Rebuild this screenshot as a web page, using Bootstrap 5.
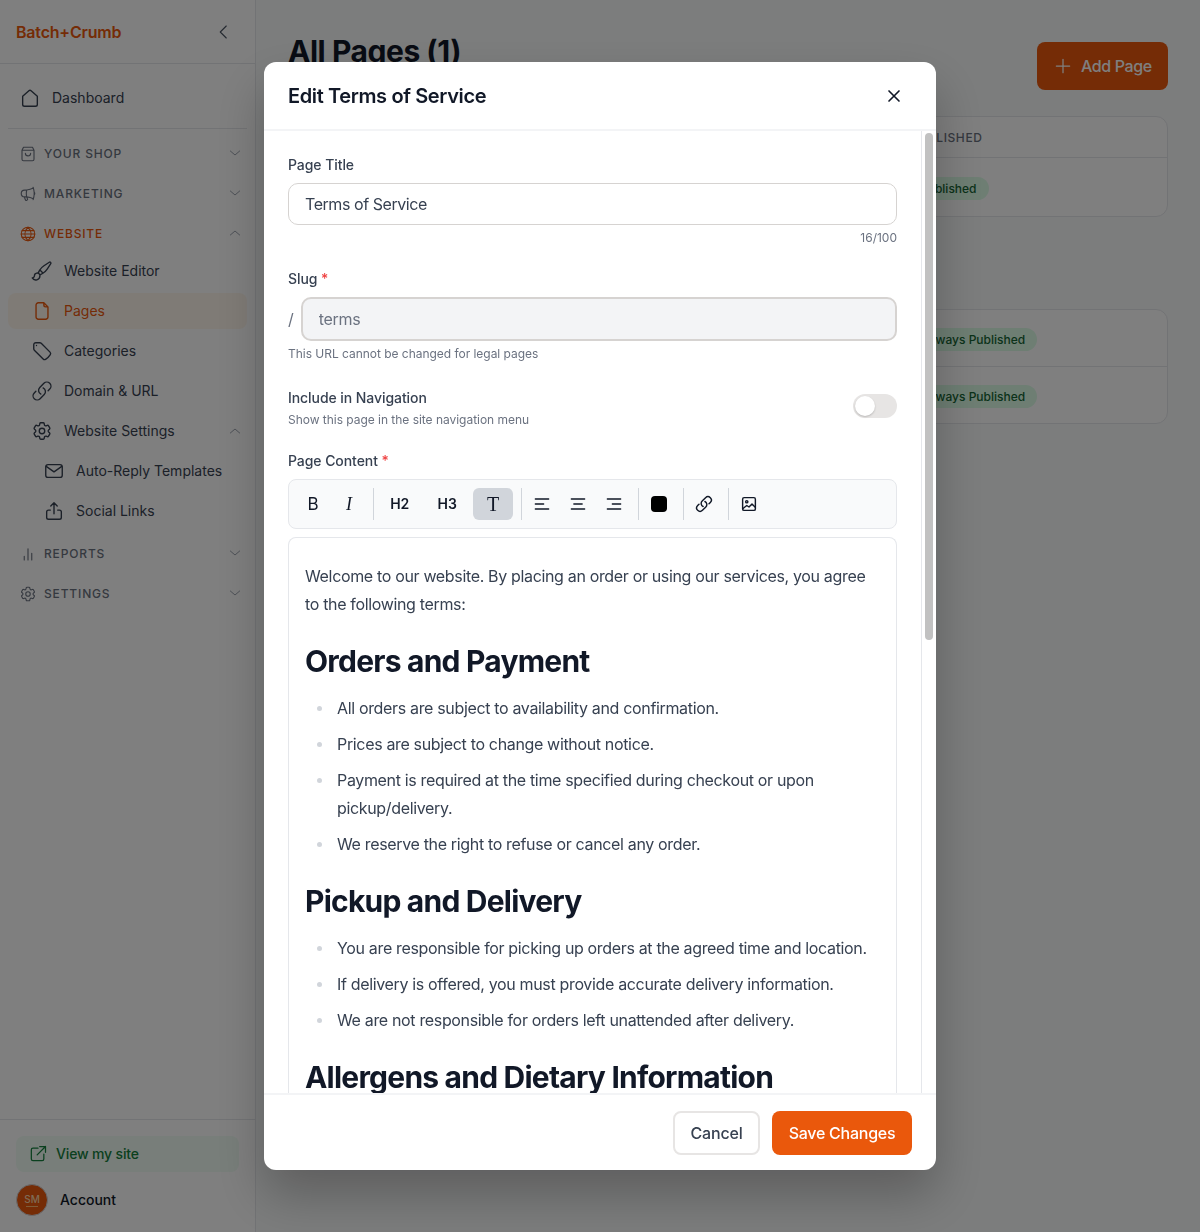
<!DOCTYPE html>
<html lang="en">
<head>
  <meta charset="UTF-8" />
  <meta name="viewport" content="width=device-width, initial-scale=1" />
  <title>All Pages</title>
  <link href="https://cdn.jsdelivr.net/npm/bootstrap@5.3.3/dist/css/bootstrap.min.css" rel="stylesheet" />
  <style>
    html, body { height: 100%; }
    body { font-family: Inter, "Liberation Sans", sans-serif; background: #f9fafb; color: #374151; overflow: hidden; }
    .ico { fill: none; stroke: currentColor; stroke-width: 1.5; stroke-linecap: round; stroke-linejoin: round; flex-shrink: 0; }
    .ico-22 { width: 22px; height: 22px; }
    .ico-18 { width: 18px; height: 18px; }
    .ico-16 { width: 16px; height: 16px; }
    .ico-20 { width: 20px; height: 20px; }

    .side { width: 256px; height: 100vh; background: #fff; border-right: 1px solid #e5e7eb; flex-shrink: 0; }
    .side-brand { height: 64px; padding: 0 16px; border-bottom: 1px solid #e5e7eb; }
    .brand-name { font-size: 16px; font-weight: 600; color: #ea580c; letter-spacing: -.2px; }
    .brand-back { color: #4b5563; margin-right: 6px; }
    .side-nav { padding-top: 14px; }
    .side-link { height: 36px; margin: 2px 8px; padding-right: 4px; padding-bottom: 1px; border-radius: 8px; font-size: 14px; color: #374151; gap: 11px; }
    .side-link.depth-0 { padding-left: 11px; }
    .side-link.depth-1 { padding-left: 23px; }
    .side-link.depth-2 { padding-left: 35px; }
    .side-link.is-active { background: #fff7ed; color: #ea580c; }
    .side-rule { margin: 12px 8px 4px; border-top: 1px solid #e5e7eb; }
    .side-group { height: 40px; margin: 0 8px; padding: 1px 4px 0 11px; gap: 7px; font-size: 12px; font-weight: 500; letter-spacing: .07em; color: #6b7280; text-transform: uppercase; }
    .side-group .chev { margin-top: -1px; }
    .side-group.is-active { color: #ea580c; }
    .side-group.is-active .chev { color: #9ca3af; }
    .side-kids { margin: -2px 0 2px; }
    .chev { color: #9ca3af; margin-left: auto; }
    .side-foot { margin-top: auto; border-top: 1px solid #e5e7eb; padding: 16px; }
    .site-link { height: 36px; padding: 0 0 1px 12px; gap: 8px; border-radius: 8px; background: #f0fdf4; color: #15803d; font-size: 14px; font-weight: 500; letter-spacing: -.15px; }
    .acct { margin-top: 12px; gap: 12px; font-size: 14px; font-weight: 500; color: #111827; }
    .acct-name { margin-bottom: 1px; }
    .avatar { width: 32px; height: 32px; border-radius: 50%; background: #ea580c; border: 1px solid #d1d5db; color: #fed7aa; font-size: 10px; line-height: 1; }
    .avatar-sub { width: 12px; height: 1px; margin-top: 2px; background: #fdba74; }

    .main-area { padding: 33px 32px 0; min-width: 0; }
    .page-title { font-size: 30px; font-weight: 700; line-height: 36px; color: #111827; margin: 0; letter-spacing: -.46px; }
    .add-btn { height: 48px; width: 131px; margin-top: 9px; padding: 0 16px; gap: 8px; border-radius: 8px; background: #ea580c; color: #fff; font-size: 16px; font-weight: 500; letter-spacing: -.4px; border: 0; }
    .page-head { margin-bottom: 26px; }
    .page-box { background: #fff; border: 1px solid #e5e7eb; border-radius: 12px; }
    .page-box + .page-box { margin-top: 92px; }
    .box-row { padding: 3px 0 0 619px; border-bottom: 1px solid #e5e7eb; height: 57px; }
    .box-row:last-child { border-bottom: 0; height: 56px; }
    .box-head { height: 41px; font-size: 12px; font-weight: 500; letter-spacing: .05em; color: #6b7280; text-transform: uppercase; padding: 1px 0 0 621px; }
    .box-row.tall { height: 58px; padding-top: 2px; }
    .pub-pill { padding: 4px 12px; border-radius: 999px; background: #dcfce7; color: #166534; font-size: 12px; font-weight: 500; line-height: 15px; }
    .shift-pill { margin-left: 4px; }

    .modal-shade { z-index: 1055; }
    .edit-modal { width: 672px; height: 1108px; border: 0; border-radius: 12px; overflow: hidden; box-shadow: 0 25px 50px rgba(0,0,0,.25); }
    .edit-head { height: 69px; padding: 0 24px; border-bottom: 2px solid #f3f4f6; flex-shrink: 0; }
    .edit-title { font-size: 20px; font-weight: 600; color: #111827; margin: 0; letter-spacing: -.38px; }
    .edit-close { color: #111827; margin-right: 8px; stroke-width: 2; }
    .edit-body { min-height: 0; flex: 1; }
    .edit-scroll { flex: 1; min-width: 0; padding: 24px 24px 0; overflow: hidden; }
    .bar-gutter { width: 15px; border-left: 1px solid #e5e7eb; background: #fff; padding: 2px 2px 0 3px; flex-shrink: 0; }
    .bar-thumb { height: 507px; width: 8px; border-radius: 4px; background: #c1c1c1; }
    .fld-label { font-size: 14px; font-weight: 500; color: #374151; line-height: 20px; letter-spacing: -.07px; margin-bottom: 8px; }
    .fld-gap { margin-top: 23px; }
    .req { color: #ef4444; }
    .fld-input { height: 42px; border-radius: 10px; border: 1px solid #d6d3d1; font-size: 16px; letter-spacing: -.44px; color: #374151; padding: 0 16px; }
    .fld-count { font-size: 12px; color: #6b7280; line-height: 16px; margin-top: 5px; text-align: right; }
    .slug-wrap { gap: 7px; margin-bottom: 5px; }
    .slug-slash { color: #6b7280; font-size: 16px; }
    .slug-input { height: 44px; border: 2px solid #d6d3d1; border-radius: 10px; background: #f3f4f6 !important; color: #6b7280; font-size: 16px; letter-spacing: -.3px; padding: 0 16px; opacity: 1; }
    .fld-help { font-size: 12px; color: #6b7280; line-height: 16px; letter-spacing: -.03px; }
    .nav-row { margin-top: 26px; }
    .nav-toggle { width: 44px; height: 24px; margin-top: 6px; border-radius: 12px; background: #e7e5e4; padding: 2px; }
    .nav-knob { width: 20px; height: 20px; border-radius: 50%; background: #fff; box-shadow: 0 1px 2px rgba(0,0,0,.2); }
    .tool-bar { height: 50px; padding: 0 8px; gap: 4px; background: #f9fafb; border: 1px solid #e5e7eb; border-radius: 8px; }
    .tool-btn { width: 32px; height: 32px; border-radius: 6px; color: #111827; font-size: 17px; line-height: 1; }
    .tool-btn .ico { stroke-width: 1.9; }
    .tool-btn .ico-20 { stroke-width: 1.6; }
    .tool-btn.wide { width: 43.5px; font-size: 14px; font-weight: 600; }
    .tool-btn.tool-t { width: 40px; background: #d1d5db; font-family: "Liberation Serif", serif; font-size: 20px; }
    .tool-btn.tool-i { font-family: "Liberation Serif", serif; font-style: italic; font-size: 18px; }
    .tool-sep { width: 1px; height: 32px; margin-left: 4px; background: #d1d5db; }
    .tool-swatch { width: 16px; height: 16px; border-radius: 4px; background: #000; }
    .prose-box { margin-top: 8px; padding: 24px 16px 0; border: 1px solid #e5e7eb; border-bottom: 0; border-radius: 8px 8px 0 0; font-size: 16px; line-height: 28px; letter-spacing: -.34px; color: #374151; }
    .prose-box p { margin: 0; }
    .prose-box h2 { font-size: 30px; font-weight: 700; line-height: 36px; letter-spacing: -.78px; color: #111827; margin: 25px 0 15px; white-space: nowrap; }
    .prose-box ul { margin: 0; padding-left: 32px; list-style: none; }
    .prose-box li { position: relative; margin-bottom: 8px; }
    .prose-box li::before { content: ""; position: absolute; left: -20px; top: 12px; width: 5px; height: 5px; border-radius: 50%; background: #d1d5db; }
    .edit-foot { height: 77px; padding: 0 24px; gap: 12px; border-top: 2px solid #f3f4f6; flex-shrink: 0; }
    .btn-cancel { height: 44px; width: 87px; padding: 0; border: 2px solid #e7e5e4; border-radius: 8px; background: #fff; color: #374151; font-size: 16px; font-weight: 500; letter-spacing: -.15px; }
    .btn-save { height: 44px; width: 140px; padding: 0; border: 0; border-radius: 8px; background: #ea580c; color: #fff; font-size: 16px; font-weight: 500; letter-spacing: -.25px; }
  </style>
</head>
<body class="d-flex">

  <svg class="d-none">
    <symbol id="i-home" viewBox="0 0 24 24"><path d="M4 10.2 10.8 4a1.8 1.8 0 0 1 2.4 0l6.8 6.2V19a2 2 0 0 1-2 2H6a2 2 0 0 1-2-2z"/></symbol>
    <symbol id="i-bag" viewBox="0 0 24 24"><path d="M6 3h12l2 4v12a2 2 0 0 1-2 2H6a2 2 0 0 1-2-2V7zM4 7h16M8.5 11a3.5 3.5 0 0 0 7 0"/></symbol>
    <symbol id="i-mega" viewBox="0 0 24 24"><path d="M10.34 15.84c-.688-.06-1.386-.09-2.09-.09H7.5a4.5 4.5 0 1 1 0-9h.75c.704 0 1.402-.03 2.09-.09m0 9.18c.253.962.584 1.892.985 2.783.247.55.06 1.21-.463 1.511l-.657.38c-.551.318-1.26.117-1.527-.461a20.845 20.845 0 0 1-1.44-4.282m3.102.069a18.03 18.03 0 0 1-.59-4.59c0-1.586.205-3.124.59-4.59m0 9.18a23.848 23.848 0 0 1 8.835 2.535M10.34 6.66a23.847 23.847 0 0 0 8.835-2.535m0 0A23.74 23.74 0 0 0 18.795 3m.38 1.125a23.91 23.91 0 0 1 1.014 5.395m-1.014 8.855c-.118.38-.245.754-.38 1.125m.38-1.125a23.91 23.91 0 0 0 1.014-5.395m0-3.46c.495.413.811 1.035.811 1.73 0 .695-.316 1.317-.811 1.73m0-3.46a24.347 24.347 0 0 1 0 3.46"/></symbol>
    <symbol id="i-globe" viewBox="0 0 24 24"><circle cx="12" cy="12" r="9"/><path d="M3 12h18M4.2 7.5h15.6M4.2 16.5h15.6M12 3c-5.5 5.5-5.5 12.5 0 18M12 3c5.5 5.5 5.5 12.5 0 18"/></symbol>
    <symbol id="i-brush" viewBox="0 0 24 24"><path d="M9.53 16.122a3 3 0 0 0-5.78 1.128 2.25 2.25 0 0 1-2.4 2.245 4.5 4.5 0 0 0 8.4-2.245c0-.399-.078-.78-.22-1.128Zm0 0a15.998 15.998 0 0 0 3.388-1.62m-5.043-.025a15.994 15.994 0 0 1 1.622-3.395m3.42 3.42a15.995 15.995 0 0 0 4.764-4.648l3.876-5.814a1.151 1.151 0 0 0-1.597-1.597L14.146 6.32a15.996 15.996 0 0 0-4.649 4.763m3.42 3.42a6.776 6.776 0 0 0-3.42-3.42"/></symbol>
    <symbol id="i-file" viewBox="0 0 24 24"><path d="M14 3H8a2.500 2.500 0 0 0-2.500 2.500v13A2.500 2.500 0 0 0 8 21h8a2.500 2.500 0 0 0 2.500-2.500V7.500zM14 3v2.500a2 2 0 0 0 2 2h2.500"/></symbol>
    <symbol id="i-tag" viewBox="0 0 24 24"><path d="M9.568 3H5.250A2.250 2.250 0 0 0 3 5.250v4.318c0 .597.237 1.170.659 1.591l9.581 9.581c.699.699 1.780.872 2.607.330a18.095 18.095 0 0 0 5.223-5.223c.542-.827.369-1.908-.330-2.607L11.160 3.660A2.250 2.250 0 0 0 9.568 3ZM6 6h.008v.008H6V6Z"/></symbol>
    <symbol id="i-link" viewBox="0 0 24 24"><path d="M13.19 8.688a4.500 4.500 0 0 1 1.242 7.244l-4.500 4.500a4.500 4.500 0 0 1-6.364-6.364l1.757-1.757m13.350-.622 1.757-1.757a4.500 4.500 0 0 0-6.364-6.364l-4.500 4.500a4.500 4.500 0 0 0 1.242 7.244"/></symbol>
    <symbol id="i-cog" viewBox="0 0 24 24"><path d="M9.594 3.940c.090-.542.560-.940 1.110-.940h2.593c.550 0 1.020.398 1.110.940l.213 1.281c.063.374.313.686.645.870.074.040.147.083.220.127.325.196.720.257 1.075.124l1.217-.456a1.125 1.125 0 0 1 1.370.490l1.296 2.247a1.125 1.125 0 0 1-.260 1.431l-1.003.827c-.293.241-.438.613-.430.992a7.723 7.723 0 0 1 0 .255c-.008.378.137.750.430.991l1.004.827c.424.350.534.955.260 1.430l-1.298 2.247a1.125 1.125 0 0 1-1.369.491l-1.217-.456c-.355-.133-.750-.072-1.076.124a6.470 6.470 0 0 1-.220.128c-.331.183-.581.495-.644.869l-.213 1.281c-.090.543-.560.940-1.110.940h-2.594c-.550 0-1.019-.398-1.110-.940l-.213-1.281c-.062-.374-.312-.686-.644-.870a6.520 6.520 0 0 1-.220-.127c-.325-.196-.720-.257-1.076-.124l-1.217.456a1.125 1.125 0 0 1-1.369-.490l-1.297-2.247a1.125 1.125 0 0 1 .260-1.431l1.004-.827c.292-.240.437-.613.430-.991a6.932 6.932 0 0 1 0-.255c.007-.380-.138-.751-.430-.992l-1.004-.827a1.125 1.125 0 0 1-.260-1.430l1.297-2.247a1.125 1.125 0 0 1 1.370-.491l1.216.456c.356.133.751.072 1.076-.124.072-.044.146-.086.220-.128.332-.183.582-.495.644-.869l.214-1.280ZM15 12a3 3 0 1 1-6 0 3 3 0 0 1 6 0Z"/></symbol>
    <symbol id="i-mail" viewBox="0 0 24 24"><rect x="3" y="5" width="18" height="14" rx="2.500"/><path d="m3.500 7 8.500 6 8.500-6"/></symbol>
    <symbol id="i-share" viewBox="0 0 24 24"><path d="M8 11H6a2 2 0 0 0-2 2v6a2 2 0 0 0 2 2h12a2 2 0 0 0 2-2v-6a2 2 0 0 0-2-2h-2M12 15V3M8.500 6.500 12 3l3.500 3.500"/></symbol>
    <symbol id="i-bars" viewBox="0 0 24 24"><path d="M7 20v-5M12 20V5M17 20v-9"/></symbol>
    <symbol id="i-open" viewBox="0 0 24 24"><path d="M12 5H6a2 2 0 0 0-2 2v11a2 2 0 0 0 2 2h11a2 2 0 0 0 2-2v-6M14 3h7v7M21 3 11 13"/></symbol>
    <symbol id="i-down" viewBox="0 0 24 24"><path d="m5 9 7 6 7-6"/></symbol>
    <symbol id="i-up" viewBox="0 0 24 24"><path d="m5 15 7-6 7 6"/></symbol>
    <symbol id="i-left" viewBox="0 0 24 24"><path d="m15 4-8 8 8 8"/></symbol>
    <symbol id="i-plus" viewBox="0 0 24 24"><path d="M12 4v16M4 12h16"/></symbol>
    <symbol id="i-x" viewBox="0 0 24 24"><path d="m6 6 12 12M18 6 6 18"/></symbol>
    <symbol id="i-left-lines" viewBox="0 0 24 24"><path d="M4 6h16M4 12h10M4 18h16"/></symbol>
    <symbol id="i-center-lines" viewBox="0 0 24 24"><path d="M4 6h16M7 12h10M4 18h16"/></symbol>
    <symbol id="i-right-lines" viewBox="0 0 24 24"><path d="M4 6h16M10 12h10M4 18h16"/></symbol>
    <symbol id="i-image" viewBox="0 0 24 24"><rect x="3.500" y="3.500" width="17" height="17" rx="2"/><circle cx="9" cy="9" r="1.500"/><path d="m4 18 5-4 3 2 4-4 4 4"/></symbol>
  </svg>

  <aside class="side d-flex flex-column">
    <div class="side-brand d-flex align-items-center justify-content-between">
      <span class="brand-name">Batch+Crumb</span>
      <svg class="ico ico-18 brand-back"><use href="#i-left"/></svg>
    </div>
    <nav class="side-nav">
      <div class="side-link depth-0 d-flex align-items-center"><svg class="ico ico-22"><use href="#i-home"/></svg>Dashboard</div>
      <div class="side-rule"></div>
      <div class="side-group d-flex align-items-center"><svg class="ico ico-18"><use href="#i-bag"/></svg>Your Shop<svg class="ico ico-16 chev"><use href="#i-down"/></svg></div>
      <div class="side-group d-flex align-items-center"><svg class="ico ico-18"><use href="#i-mega"/></svg>Marketing<svg class="ico ico-16 chev"><use href="#i-down"/></svg></div>
      <div class="side-group is-active d-flex align-items-center"><svg class="ico ico-18"><use href="#i-globe"/></svg>Website<svg class="ico ico-16 chev"><use href="#i-up"/></svg></div>
      <div class="side-kids d-flex flex-column">
        <div class="side-link depth-1 d-flex align-items-center"><svg class="ico ico-22"><use href="#i-brush"/></svg>Website Editor</div>
        <div class="side-link depth-1 is-active d-flex align-items-center"><svg class="ico ico-22"><use href="#i-file"/></svg>Pages</div>
        <div class="side-link depth-1 d-flex align-items-center"><svg class="ico ico-22"><use href="#i-tag"/></svg>Categories</div>
        <div class="side-link depth-1 d-flex align-items-center"><svg class="ico ico-22"><use href="#i-link"/></svg>Domain &amp; URL</div>
        <div class="side-link depth-1 d-flex align-items-center"><svg class="ico ico-22"><use href="#i-cog"/></svg>Website Settings<svg class="ico ico-16 chev"><use href="#i-up"/></svg></div>
        <div class="side-link depth-2 d-flex align-items-center"><svg class="ico ico-22"><use href="#i-mail"/></svg>Auto-Reply Templates</div>
        <div class="side-link depth-2 d-flex align-items-center"><svg class="ico ico-22"><use href="#i-share"/></svg>Social Links</div>
      </div>
      <div class="side-group d-flex align-items-center"><svg class="ico ico-18"><use href="#i-bars"/></svg>Reports<svg class="ico ico-16 chev"><use href="#i-down"/></svg></div>
      <div class="side-group d-flex align-items-center"><svg class="ico ico-18"><use href="#i-cog"/></svg>Settings<svg class="ico ico-16 chev"><use href="#i-down"/></svg></div>
    </nav>
    <div class="side-foot">
      <div class="site-link d-flex align-items-center"><svg class="ico ico-20"><use href="#i-open"/></svg>View my site</div>
      <div class="acct d-flex align-items-center">
        <div class="avatar d-flex flex-column align-items-center justify-content-center"><span>SM</span><span class="avatar-sub"></span></div>
        <span class="acct-name">Account</span>
      </div>
    </div>
  </aside>

  <main class="main-area flex-grow-1">
    <div class="page-head d-flex justify-content-between align-items-start">
      <h1 class="page-title">All Pages (1)</h1>
      <button class="add-btn d-flex align-items-center"><svg class="ico ico-20"><use href="#i-plus"/></svg>Add Page</button>
    </div>
    <div class="page-box">
      <div class="box-row box-head d-flex align-items-center">Published</div>
      <div class="box-row tall d-flex align-items-center"><span class="pub-pill">Published</span></div>
    </div>
    <div class="page-box">
      <div class="box-row d-flex align-items-center"><span class="pub-pill shift-pill">Always Published</span></div>
      <div class="box-row d-flex align-items-center"><span class="pub-pill shift-pill">Always Published</span></div>
    </div>
  </main>

  <div class="modal-backdrop show"></div>
  <div class="modal modal-shade d-flex align-items-center justify-content-center">
    <div class="modal-content edit-modal d-flex flex-column">
      <div class="edit-head d-flex align-items-center justify-content-between">
        <h2 class="edit-title">Edit Terms of Service</h2>
        <svg class="ico ico-20 edit-close"><use href="#i-x"/></svg>
      </div>
      <div class="edit-body d-flex">
        <div class="edit-scroll">
          <div class="fld-label">Page Title</div>
          <input class="form-control fld-input" type="text" value="Terms of Service" />
          <div class="fld-count">16/100</div>

          <div class="fld-label fld-gap">Slug <span class="req">*</span></div>
          <div class="slug-wrap d-flex align-items-center">
            <span class="slug-slash">/</span>
            <input class="form-control slug-input" type="text" value="terms" disabled />
          </div>
          <div class="fld-help">This URL cannot be changed for legal pages</div>

          <div class="nav-row d-flex justify-content-between align-items-start">
            <div>
              <div class="fld-label mb-1">Include in Navigation</div>
              <div class="fld-help">Show this page in the site navigation menu</div>
            </div>
            <div class="nav-toggle"><div class="nav-knob"></div></div>
          </div>

          <div class="fld-label fld-gap">Page Content <span class="req">*</span></div>
          <div class="tool-bar d-flex align-items-center">
            <div class="tool-btn d-flex align-items-center justify-content-center">B</div>
            <div class="tool-btn tool-i d-flex align-items-center justify-content-center">I</div>
            <div class="tool-sep"></div>
            <div class="tool-btn wide d-flex align-items-center justify-content-center">H2</div>
            <div class="tool-btn wide d-flex align-items-center justify-content-center">H3</div>
            <div class="tool-btn tool-t d-flex align-items-center justify-content-center">T</div>
            <div class="tool-sep"></div>
            <div class="tool-btn d-flex align-items-center justify-content-center"><svg class="ico ico-20"><use href="#i-left-lines"/></svg></div>
            <div class="tool-btn d-flex align-items-center justify-content-center"><svg class="ico ico-20"><use href="#i-center-lines"/></svg></div>
            <div class="tool-btn d-flex align-items-center justify-content-center"><svg class="ico ico-20"><use href="#i-right-lines"/></svg></div>
            <div class="tool-sep"></div>
            <div class="tool-btn d-flex align-items-center justify-content-center"><span class="tool-swatch"></span></div>
            <div class="tool-sep"></div>
            <div class="tool-btn d-flex align-items-center justify-content-center"><svg class="ico ico-18"><use href="#i-link"/></svg></div>
            <div class="tool-sep"></div>
            <div class="tool-btn d-flex align-items-center justify-content-center"><svg class="ico ico-18"><use href="#i-image"/></svg></div>
          </div>
          <div class="prose-box">
            <p>Welcome to our website. By placing an order or using our services, you agree to the following terms:</p>
            <h2>Orders and Payment</h2>
            <ul>
              <li>All orders are subject to availability and confirmation.</li>
              <li>Prices are subject to change without notice.</li>
              <li>Payment is required at the time specified during checkout or upon pickup/delivery.</li>
              <li>We reserve the right to refuse or cancel any order.</li>
            </ul>
            <h2>Pickup and Delivery</h2>
            <ul>
              <li>You are responsible for picking up orders at the agreed time and location.</li>
              <li>If delivery is offered, you must provide accurate delivery information.</li>
              <li>We are not responsible for orders left unattended after delivery.</li>
            </ul>
            <h2>Allergens and Dietary Information</h2>
          </div>
        </div>
        <div class="bar-gutter"><div class="bar-thumb"></div></div>
      </div>
      <div class="edit-foot d-flex align-items-center justify-content-end">
        <button class="btn btn-cancel">Cancel</button>
        <button class="btn btn-save">Save Changes</button>
      </div>
    </div>
  </div>

  <script src="https://cdn.jsdelivr.net/npm/bootstrap@5.3.3/dist/js/bootstrap.bundle.min.js"></script>
</body>
</html>
